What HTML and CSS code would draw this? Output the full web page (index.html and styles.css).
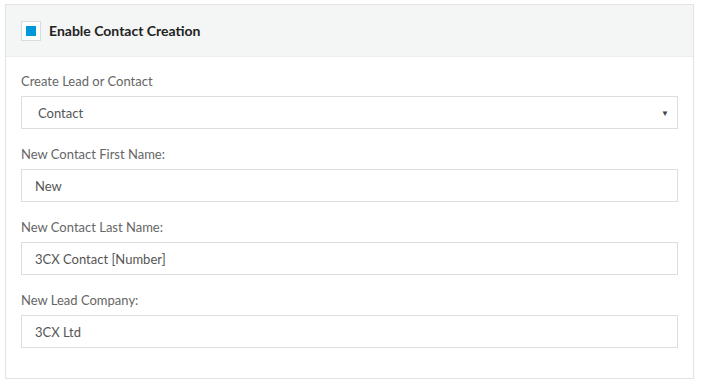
FILE: index.html
```html
<!DOCTYPE html>
<html lang="en">
<head>
    <meta charset="UTF-8">
    <title>Contact Creation</title>
    <link rel="stylesheet" href="styles.css">
</head>
<body>

<div class="panel">
    <div class="panel-header">
        <span class="check"><span class="check-mark"></span></span>
        <span class="panel-title">Enable Contact Creation</span>
    </div>
    <div class="panel-body">
        <div class="field">
            <label class="field-label">Create Lead or Contact</label>
            <div class="select">
                <span>Contact</span>
                <span class="caret">&#9660;</span>
            </div>
        </div>
        <div class="field">
            <label class="field-label">New Contact First Name:</label>
            <div class="input">New</div>
        </div>
        <div class="field">
            <label class="field-label">New Contact Last Name:</label>
            <div class="input">3CX Contact [Number]</div>
        </div>
        <div class="field">
            <label class="field-label">New Lead Company:</label>
            <div class="input">3CX Ltd</div>
        </div>
    </div>
</div>

</body>
</html>
```

FILE: styles.css
```css
body {
    margin: 0;
    padding: 4px 6px 0 5px;
    background-color: #fff;
    font-family: Lato, "Open Sans", sans-serif;
    font-size: 13px;
    color: #555;
}

.panel {
    width: 687px;
    border: 1px solid #e2e4e4;
    box-shadow: 0 1px 1px rgba(0, 0, 0, 0.04);
}

.panel-header {
    display: flex;
    align-items: center;
    gap: 8px;
    height: 51px;
    padding: 0 15px;
    background-color: #f4f5f5;
    border-bottom: 1px solid #eceeee;
}

.check {
    display: flex;
    align-items: center;
    justify-content: center;
    width: 18px;
    height: 18px;
    background-color: #fff;
    border: 1px solid #d9dcdc;
}

.check-mark {
    width: 10px;
    height: 10px;
    background-color: #0097d8;
}

.panel-title {
    font-size: 14px;
    font-weight: bold;
    color: #222;
}

.panel-body {
    padding: 14px 15px 30px;
}

.field {
    margin-bottom: 15px;
}

.field:last-child {
    margin-bottom: 0;
}

.field-label {
    display: block;
    height: 20px;
    line-height: 20px;
    margin-bottom: 5px;
    color: #666;
}

.select,
.input {
    display: flex;
    align-items: center;
    justify-content: space-between;
    height: 31px;
    padding: 0 8px 0 16px;
    border: 1px solid #dcdfdf;
    color: #555;
}

.input {
    padding-left: 13px;
}

.caret {
    font-size: 8px;
    color: #444;
}
```
